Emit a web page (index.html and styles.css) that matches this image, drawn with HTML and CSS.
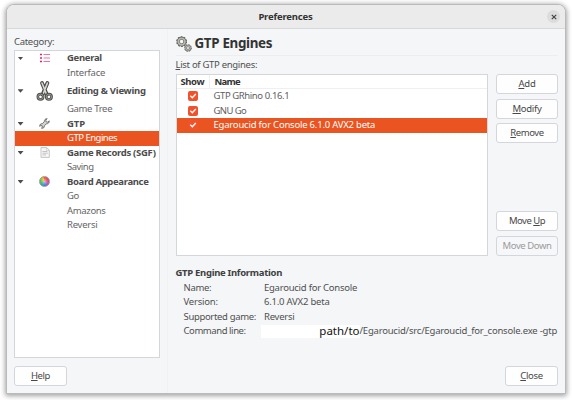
FILE: index.html
```
<!DOCTYPE html>
<html lang="en">
<head>
<meta charset="utf-8">
<title>Preferences</title>
<link rel="stylesheet" href="styles.css">
</head>
<body>
<div class="window">
  <header class="titlebar">
    <span class="title">Preferences</span>
    <button class="close-x" aria-label="Close window"><svg width="6" height="6" viewBox="0 0 6 6"><path d="M.8.8l4.4 4.4M5.2.8L.8 5.2" stroke="#444" stroke-width="1.2"/></svg></button>
  </header>
  <div class="body">
    <aside class="sidebar">
      <div class="caption category">Category:</div>
      <div class="tree">
        <div class="row group"><i class="arrow"></i><span class="icon"><svg width="10" height="10" viewBox="0 0 10 10"><path d="M0 1.5h2M0 5h2M0 8.5h2" stroke="#e0246a" stroke-width="1.7"/><path d="M3.5 1.5H10M3.5 5H10M3.5 8.5H10" stroke="#e85088" stroke-width=".8"/></svg></span><b class="w-general">General</b></div>
        <div class="row"><span class="w-interface">Interface</span></div>
        <div class="row group tall"><i class="arrow"></i><span class="icon"><svg width="18" height="22" viewBox="0 0 18 22"><g fill="none" stroke="#4c4c49"><path d="M6 3l4.800 11.500M11.400 3L6.600 14.500" stroke-width="3.800" stroke-linecap="round"/><path d="M6 3l4.500 11.200M11.400 3L7 14.200" stroke="#d8d8d3" stroke-width="1.600" stroke-linecap="round"/><circle cx="4.500" cy="16.800" r="2.700" stroke-width="2.600"/><circle cx="12.900" cy="16.800" r="2.700" stroke-width="2.600"/><circle cx="4.500" cy="16.800" r="2.700" stroke="#aaa9a2" stroke-width=".8"/><circle cx="12.900" cy="16.800" r="2.700" stroke="#aaa9a2" stroke-width=".8"/></g></svg></span><b class="w-editing">Editing &amp; Viewing</b></div>
        <div class="row"><span class="w-tree">Game Tree</span></div>
        <div class="row group"><i class="arrow"></i><span class="icon"><svg width="11" height="11" viewBox="0 0 12 12"><path d="M8.9.8L7.4 2.3l.4 1.8 1.8.4 1.5-1.4c.3 1.9-1 3.4-3 3.2L5.8 8.6c.2 1.9-1.3 3-3.1 2.6l1.1-1.4-.4-1.3-1.4-.3L.8 9.1C.5 7.3 1.800 6 3.500 6.300l2.300-2.300C5.500 2.100 7.100.5 8.900.8z" fill="#d2d2ce" stroke="#5c5c59" stroke-width=".9" stroke-linejoin="round"/></svg></span><b class="w-gtp">GTP</b></div>
        <div class="row selected"><span class="w-engines">GTP Engines</span></div>
        <div class="row group"><i class="arrow"></i><span class="icon"><svg width="10" height="11" viewBox="0 0 10 11"><path d="M1 .6h5.700L9.300 3.200v7.200H1z" fill="#f7f7f7" stroke="#c0c0c0" stroke-width=".9"/><path d="M6.500.8v2.600h2.700" fill="none" stroke="#c8c8c8" stroke-width=".7"/><path d="M2.500 4.500h4.800M2.500 6.200h5.300M2.500 7.900h3.500" stroke="#b5b5b5" stroke-width=".8"/></svg></span><b class="w-records">Game Records (SGF)</b></div>
        <div class="row"><span class="w-saving">Saving</span></div>
        <div class="row group"><i class="arrow"></i><span class="icon"><span class="wheel"></span></span><b class="w-board">Board Appearance</b></div>
        <div class="row"><span class="w-go">Go</span></div>
        <div class="row"><span class="w-amazons">Amazons</span></div>
        <div class="row"><span class="w-reversi">Reversi</span></div>
      </div>
      <button class="btn bottom"><span class="w-help"><u>H</u>elp</span></button>
    </aside>
    <main class="page">
      <h1 class="heading"><svg width="16" height="16" viewBox="0 0 16 16"><g fill="none"><circle cx="5.600" cy="5.600" r="4.600" stroke="#62625e" stroke-width="1.700" stroke-dasharray="1.700 1.190"/><circle cx="5.600" cy="5.600" r="3.300" stroke="#62625e" stroke-width="3"/><circle cx="5.600" cy="5.600" r="3.300" stroke="#b9b8b0" stroke-width="1.800"/><circle cx="12" cy="12" r="3.100" stroke="#62625e" stroke-width="1.300" stroke-dasharray="1.300 1.130"/><circle cx="12" cy="12" r="2.200" stroke="#62625e" stroke-width="2.300"/><circle cx="12" cy="12" r="2.200" stroke="#b9b8b0" stroke-width="1.200"/></g></svg><span class="w-heading">GTP Engines</span></h1>
      <div class="caption list-caption"><span class="w-list"><u>L</u>ist of GTP engines:</span></div>
      <div class="columns">
        <div class="table">
          <div class="thead"><b class="show"><span class="w-show">Show</span></b><b class="name"><span class="w-name">Name</span></b></div>
          <div class="trow"><span class="cell"><span class="check"><svg width="10" height="10" viewBox="0 0 10 10"><path d="M2.300 4.800l2 2L7.800 3" fill="none" stroke="#fff" stroke-width="1.300"/></svg></span></span><span class="w-rhino">GTP GRhino 0.16.1</span></div>
          <div class="trow"><span class="cell"><span class="check"><svg width="10" height="10" viewBox="0 0 10 10"><path d="M2.300 4.800l2 2L7.800 3" fill="none" stroke="#fff" stroke-width="1.300"/></svg></span></span><span class="w-gnu">GNU Go</span></div>
          <div class="trow selected"><span class="cell"><span class="check"><svg width="10" height="10" viewBox="0 0 10 10"><path d="M2.300 4.800l2 2L7.800 3" fill="none" stroke="#fff" stroke-width="1.300"/></svg></span></span><span class="w-egar">Egaroucid for Console 6.1.0 AVX2 beta</span></div>
        </div>
        <div class="actions">
          <button class="btn"><span class="w-add"><u>A</u>dd</span></button>
          <button class="btn"><span class="w-modify"><u>M</u>odify</span></button>
          <button class="btn"><span class="w-remove"><u>R</u>emove</span></button>
          <button class="btn push"><span class="w-up">Move <u>U</u>p</span></button>
          <button class="btn disabled" disabled><span class="w-down">Move Down</span></button>
        </div>
      </div>
      <section class="info">
        <b class="w-info">GTP Engine Information</b>
        <dl>
          <dt class="w-dname">Name:</dt><dd class="w-console">Egaroucid for Console</dd>
          <dt class="w-version">Version:</dt><dd class="w-beta">6.1.0 AVX2 beta</dd>
          <dt class="w-support">Supported game:</dt><dd class="w-reversi">Reversi</dd>
          <dt class="w-cmd">Command line:</dt><dd class="command"><span class="mask">path/to</span><span class="w-exe">/Egaroucid/src/Egaroucid_for_console.exe -gtp</span></dd>
        </dl>
      </section>
      <button class="btn bottom right"><span class="w-close"><u>C</u>lose</span></button>
    </main>
  </div>
</div>
</body>
</html>
```
FILE: styles.css
```
* { box-sizing: border-box; }
body {
  margin: 0;
  width: 572px;
  height: 400px;
  padding: 4px 6px 6px 6px;
  overflow: hidden;
  background: #fff;
  font: 9.5px/14.5px "Noto Sans", sans-serif;
  color: #505050;
  white-space: nowrap;
}
.window {
  width: 560px;
  height: 390px;
  border: 1px solid #b8babb;
  border-radius: 8px 8px 1px 1px;
  background: #f4f6f8;
  box-shadow: 0 1px 5px 1px rgba(0,0,0,.36);
}
.titlebar {
  height: 24px;
  display: flex;
  align-items: center;
  justify-content: flex-end;
  padding-right: 5px;
  background: #ebebeb;
  border-bottom: 1px solid #d6d9d8;
  border-radius: 7px 7px 0 0;
  color: #333;
}
.title {
  flex: 1;
  padding: 1px 0 0 17px;
  text-align: center;
  font-weight: 700;
  letter-spacing: -.18px;
}
.close-x {
  width: 13px;
  height: 13px;
  padding: 0;
  border: 0;
  border-radius: 50%;
  background: #dcdcdc;
  display: grid;
  place-items: center;
}
.body { display: flex; height: 364px; }
.sidebar { width: 161px; padding: 5.500px 0 0 7px; border-right: 1px solid #eff1f3; }
.caption { height: 15.500px; }
.category { letter-spacing: -.3px; }
.tree {
  width: 146px;
  height: 308px;
  border: 1px solid #d3d6db;
  background: #fff;
}
.row { height: 14.500px; padding-left: 52px; display: flex; align-items: center; color: #666; }
.row.group { padding-left: 2.500px; color: #4c4c4c; }
.row.tall { height: 22px; }
.arrow {
  flex: none;
  width: 6px;
  height: 3.500px;
  background: #4d4d4d;
  clip-path: polygon(0 0, 100% 0, 50% 100%);
}
.icon { flex: none; width: 43.500px; padding-right: 1px; display: flex; justify-content: center; }
.wheel {
  width: 11px;
  height: 11px;
  border-radius: 50%;
  border: .5px solid #999;
  background: radial-gradient(circle, rgba(255,255,255,.55), transparent 60%), conic-gradient(#ee5c3c, #ee3e5a 60deg, #b355bc 120deg, #3c83df 180deg, #27b6a0 230deg, #62c636 280deg, #f0bd28 335deg, #ee5c3c);
}
.row.selected, .trow.selected { background: #e95420; color: #fff; }
.btn {
  height: 20px;
  padding: 0;
  border: 1px solid #d3d6dc;
  border-radius: 3px;
  background: #fefefe;
  color: #484848;
  font: inherit;
  line-height: 18px;
}
.btn u, .caption u { text-underline-offset: 1px; text-decoration-thickness: 1px; }
.btn.disabled { background: #f6f7f9; color: #9a9b9d; }
.btn.bottom { display: block; width: 53px; margin-top: 8px; }
.page { flex: 1; min-width: 0; padding: 5px 7px 0 7.500px; display: flex; flex-direction: column; }
.heading {
  height: 22px;
  margin: 0;
  padding-bottom: 2px;
  border-bottom: 1px solid #eceef0;
  display: flex;
  align-items: center;
  gap: 3px;
  font-size: 13.400px;
  color: #333;
}
.list-caption { height: 18px; padding-top: 2px; }
.columns { display: flex; justify-content: space-between; height: 182px; }
.table { width: 312.500px; border: 1px solid #d3d6da; background: #fff; }
.thead { display: flex; height: 14px; border-bottom: 1px solid #edeff0; color: #333; line-height: 14px; }
.show { width: 33px; padding-left: 4px; border-right: 1px solid #edeff0; }
.name { padding-left: 5px; }
.trow { display: flex; height: 14.500px; color: #606060; }
.cell { width: 37px; display: flex; align-items: center; padding-left: 11.500px; }
.check { width: 10px; height: 10px; border-radius: 2px; background: #f0532b; display: block; }
.check svg { display: block; }
.actions { width: 62px; display: flex; flex-direction: column; gap: 4.600px; }
.push { margin-top: auto; }
.info { margin-top: 10px; height: 73px; color: #404040; }
.info b { display: block; }
dl { margin: 0; padding-left: 8px; display: grid; grid-template-columns: 80.500px 1fr; color: #505050; }
dt, dd { margin: 0; height: 14.500px; }
.command { display: flex; align-items: center; margin-left: -3.500px; }
.mask { width: 99px; height: 12.500px; background: #fff; display: flex; justify-content: flex-end; align-items: center; font-size: 11.500px; color: #111; }
.right.bottom { align-self: flex-end; margin-top: 27px; }

/* Tracking per label */
.w-general, .w-records, .w-info, .w-dname, .w-list, .w-modify { letter-spacing: -.3px; }
.w-interface, .w-editing, .w-console, .w-reversi { letter-spacing: -.25px; }
.w-tree, .w-board, .w-amazons, .w-support, .w-close { letter-spacing: -.34px; }
.w-gtp { letter-spacing: -.1px; }
.w-engines, .w-saving, .w-up { letter-spacing: -.5px; }
.w-heading { letter-spacing: -.33px; }
.w-show, .w-rhino, .w-help, .w-go { letter-spacing: -.4px; }
.w-name { letter-spacing: -.75px; }
.w-gnu { letter-spacing: -.6px; }
.w-egar, .w-add, .w-version, .w-beta, .w-exe { letter-spacing: -.21px; }
.w-remove, .w-down, .w-cmd { letter-spacing: -.43px; }
```
